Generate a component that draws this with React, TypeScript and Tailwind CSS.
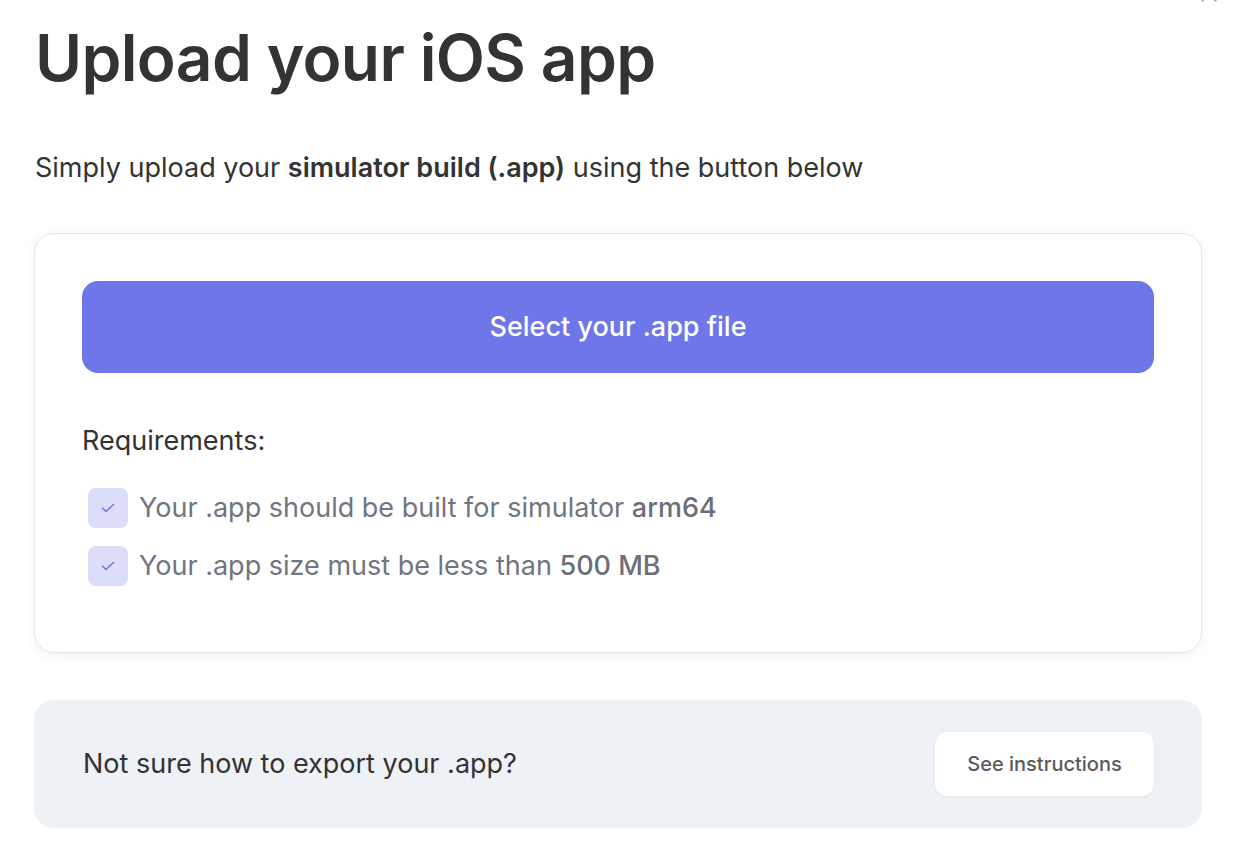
import { X } from 'lucide-react';

const REQUIREMENTS: { text: string; bold: string }[] = [
  { text: 'Your .app should be built for simulator ', bold: 'arm64' },
  { text: 'Your .app size must be less than ', bold: '500 MB' },
];

function CheckBox() {
  return (
    <span className="w-10 h-10 rounded-lg bg-[#dcddf8] flex items-center justify-center shrink-0">
      <svg width="14" height="10" viewBox="0 0 14 10" fill="none">
        <path d="M1.5 5 L5 8.5 L12.5 1.5" stroke="#6a70e0" strokeWidth="1.4" strokeLinecap="round" strokeLinejoin="round" />
      </svg>
    </span>
  );
}

export default function App() {
  return (
    <div
      className="relative min-h-screen bg-white px-[34px] text-[#333333]"
      style={{ fontFamily: 'Inter, "Noto Sans", sans-serif' }}
    >
      {/* close button, mostly scrolled out of view */}
      <button className="absolute right-[14px] -top-[19px] text-[#a3a9b5] border-0 bg-transparent p-0">
        <X size={26} strokeWidth={2} />
      </button>

      <h1 className="pt-[19px] pl-px text-[64px] leading-[78px] font-semibold tracking-[-0.01em] text-[#333333]">
        Upload your iOS app
      </h1>

      <p className="mt-[53px] pl-px text-[27px] leading-[36px] text-[#333333]">
        Simply upload your <span className="font-semibold">simulator build (.app)</span> using the button below
      </p>

      {/* Upload card */}
      <section className="mt-[47px] w-[1168px] rounded-[20px] border border-[#e5e7eb] bg-white p-[47px] shadow-[0_2px_12px_rgba(0,0,0,0.06)]">
        <button className="w-full h-[92px] rounded-[16px] bg-[#6f76ea] text-white text-[27px] font-medium">
          Select your .app file
        </button>

        <h3 className="mt-[50px] text-[27px] leading-[36px] text-[#333333]">Requirements:</h3>

        <ul className="mt-[29px] flex flex-col gap-[18px] pl-[6px] pb-[19px]">
          {REQUIREMENTS.map((r) => (
            <li key={r.bold} className="flex items-center gap-[11px] text-[27px] leading-[40px] text-[#71757f]">
              <CheckBox />
              <span>
                {r.text}
                <span className="font-medium text-[#6b6f79]">{r.bold}</span>
              </span>
            </li>
          ))}
        </ul>
      </section>

      {/* Export help */}
      <section className="mt-[47px] w-[1168px] h-[128px] rounded-[20px] bg-[#eef1f5] pl-[49px] pr-[48px] flex items-center justify-between">
        <p className="text-[27px] text-[#333333]">Not sure how to export your .app?</p>
        <button className="w-[219px] h-[64px] rounded-[12px] bg-white text-[20px] font-medium text-[#5a5a5a] shadow-[0_1px_3px_rgba(0,0,0,0.06)]">
          See instructions
        </button>
      </section>
    </div>
  );
}
